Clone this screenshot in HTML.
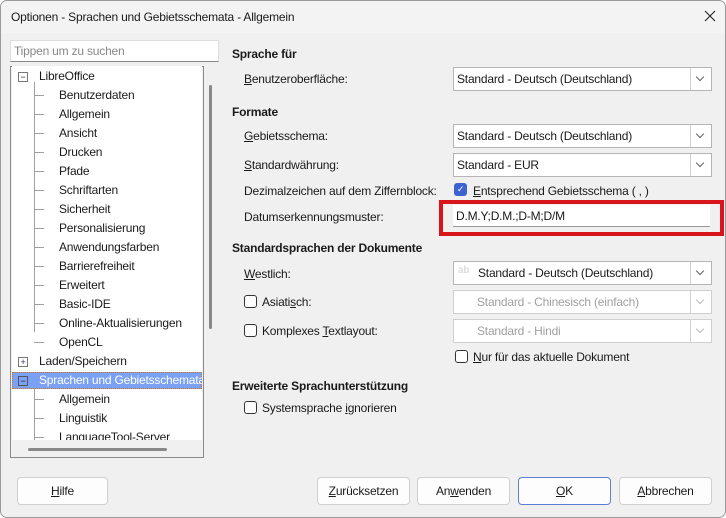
<!DOCTYPE html><html><head><style>
body{margin:0;width:726px;height:518px;background:#fff;font-family:"Liberation Sans",sans-serif;font-size:12px;letter-spacing:-0.2px;color:#1a1a1a;position:relative;overflow:hidden}
.win{position:absolute;left:0;top:0;width:724px;height:516px;border:1px solid #9a9a9a;border-radius:7px;background:#f0f0f0;overflow:hidden}
.a{position:absolute;white-space:nowrap}
.tb{position:absolute;left:0;top:0;width:724px;height:32px;background:#f3f3f3}
.tree{position:absolute;left:9px;top:65px;width:192px;height:390px;border:1px solid #8a8a8a;background:#f0f0f0}
.tin{position:absolute;left:1px;top:1px;width:190px;height:374px;background:#fff;overflow:hidden}
.it{position:absolute;left:47px}
.ln{position:absolute;left:16px;width:10px;border-top:1px solid #a0a0a0}
.cb{position:absolute;left:452px;width:257px;height:22px;border:1px solid #b5b5b5;background:#fff}
.cb span{position:absolute;left:3px;top:4px}
.cb i{position:absolute;right:0;top:0;width:20px;height:22px;border-left:1px solid #d0d0d0}
.cb i:after{content:"";position:absolute;left:6px;top:6px;width:5px;height:5px;border-right:1px solid #666;border-bottom:1px solid #666;transform:rotate(45deg)}
.dis{color:#a0a0a0;border-color:#cfcfcf}
.dis i:after{border-color:#bbb}
.h{font-weight:bold}
.chk{position:absolute;width:11px;height:11px;border:1px solid #333;border-radius:3px;background:#fff}
.btn{position:absolute;top:476px;height:26px;border:1px solid #d0d0d0;border-radius:4px;background:#fdfdfd;text-align:center;line-height:26px}
u{text-decoration:underline}
</style></head><body><div class="win">
<div class="tb"><div class="a" style="left:10px;top:9px">Optionen - Sprachen und Gebietsschemata - Allgemein</div>
<svg class="a" style="left:703px;top:9px" width="12" height="12"><path d="M1 1L11 11M11 1L1 11" stroke="#222" stroke-width="1.1"/></svg></div>
<div class="a" style="left:9px;top:39px;width:207px;height:20px;background:#fff;border:1px solid #ddd;border-bottom-color:#888"><span class="a" style="left:3px;top:3px;color:#888">Tippen um zu suchen</span></div>
<div class="tree"><div class="tin" style="top:-1px">
<div class="a" style="left:6px;top:6px;width:8px;height:8px;border:1px solid #777;font-size:9px;line-height:8px;text-align:center">−</div>
<div class="a" style="left:27px;top:3px">LibreOffice</div>
<div class="a" style="left:22px;top:16px;height:250px;border-left:1px solid #a0a0a0"></div>
<div class="it a" style="top:22px">Benutzerdaten</div>
<div class="it a" style="top:41px">Allgemein</div>
<div class="it a" style="top:60px">Ansicht</div>
<div class="it a" style="top:79px">Drucken</div>
<div class="it a" style="top:98px">Pfade</div>
<div class="it a" style="top:117px">Schriftarten</div>
<div class="it a" style="top:136px">Sicherheit</div>
<div class="it a" style="top:155px">Personalisierung</div>
<div class="it a" style="top:174px">Anwendungsfarben</div>
<div class="it a" style="top:193px">Barrierefreiheit</div>
<div class="it a" style="top:212px">Erweitert</div>
<div class="it a" style="top:231px">Basic-IDE</div>
<div class="it a" style="top:250px">Online-Aktualisierungen</div>
<div class="it a" style="top:269px">OpenCL</div>
<div class="ln" style="left:22px;top:29px"></div><div class="ln" style="left:22px;top:48px"></div><div class="ln" style="left:22px;top:67px"></div><div class="ln" style="left:22px;top:86px"></div><div class="ln" style="left:22px;top:105px"></div><div class="ln" style="left:22px;top:124px"></div><div class="ln" style="left:22px;top:143px"></div><div class="ln" style="left:22px;top:162px"></div><div class="ln" style="left:22px;top:181px"></div><div class="ln" style="left:22px;top:200px"></div><div class="ln" style="left:22px;top:219px"></div><div class="ln" style="left:22px;top:238px"></div><div class="ln" style="left:22px;top:257px"></div><div class="ln" style="left:22px;top:276px"></div>
<div class="a" style="left:6px;top:291px;width:8px;height:8px;border:1px solid #777;font-size:9px;line-height:8px;text-align:center;color:#336">+</div>
<div class="a" style="left:27px;top:288px">Laden/Speichern</div>
<div class="a" style="left:0;top:306px;width:190px;height:17px;background:#7ba1f5;border:1px dotted #d07020;box-sizing:border-box"></div>
<div class="a" style="left:6px;top:310px;width:8px;height:8px;border:1px solid #555;font-size:9px;line-height:8px;text-align:center">−</div>
<div class="a" style="left:27px;top:307px;color:#fff">Sprachen und Gebietsschemata</div>
<div class="a" style="left:22px;top:322px;height:60px;border-left:1px solid #a0a0a0"></div>
<div class="it a" style="top:326px">Allgemein</div>
<div class="it a" style="top:345px">Linguistik</div>
<div class="it a" style="top:364px">LanguageTool-Server</div>
<div class="ln" style="left:22px;top:333px"></div><div class="ln" style="left:22px;top:352px"></div><div class="ln" style="left:22px;top:371px"></div>
</div>
<div class="a" style="left:198px;top:18px;width:3px;height:244px;background:#888;border-radius:2px"></div>
<div class="a" style="left:17px;top:381px;width:139px;height:3px;background:#888;border-radius:2px"></div>
</div>
<div class="a h" style="left:231px;top:46px">Sprache für</div>
<div class="a" style="left:243px;top:71px"><u>B</u>enutzeroberfläche:</div>
<div class="cb" style="top:66px"><span>Standard - Deutsch (Deutschland)</span><i></i></div>
<div class="a h" style="left:231px;top:104px">Formate</div>
<div class="a" style="left:243px;top:128px"><u>G</u>ebietsschema:</div>
<div class="cb" style="top:123px"><span>Standard - Deutsch (Deutschland)</span><i></i></div>
<div class="a" style="left:243px;top:157px"><u>S</u>tandardwährung:</div>
<div class="cb" style="top:152px"><span>Standard - EUR</span><i></i></div>
<div class="a" style="left:243px;top:183px">Dezimalzeichen auf dem Ziffernblock:</div>
<div class="a" style="left:453px;top:182px;width:13px;height:13px;background:#3c63d0;border-radius:3px;color:#fff;font-size:9px;line-height:13px;text-align:center">✓</div>
<div class="a" style="left:472px;top:183px"><u>E</u>ntsprechend Gebietsschema ( , )</div>
<div class="a" style="left:243px;top:209px">Datumserkennungsmuster:</div>
<div class="a" style="left:438px;top:199px;width:277px;height:28px;border:4px solid #d9141c"></div>
<div class="a" style="left:452px;top:204px;width:257px;height:21px;background:#fff;border-bottom:1px solid #999"><span class="a" style="left:3px;top:4px">D.M.Y;D.M.;D-M;D/M</span></div>
<div class="a h" style="left:231px;top:240px">Standardsprachen der Dokumente</div>
<div class="a" style="left:243px;top:266px"><u>W</u>estlich:</div>
<div class="cb" style="top:260px"><span style="left:24px">Standard - Deutsch (Deutschland)</span><b class="a" style="left:4px;top:3px;color:#ddd;font-size:10px">ab</b><i></i></div>
<div class="chk" style="left:243px;top:294px"></div><div class="a" style="left:261px;top:294px">Asiati<u>s</u>ch:</div>
<div class="cb dis" style="top:289px"><span style="left:23px">Standard - Chinesisch (einfach)</span><i></i></div>
<div class="chk" style="left:243px;top:323px"></div><div class="a" style="left:261px;top:323px">Komplexes <u>T</u>extlayout:</div>
<div class="cb dis" style="top:318px"><span style="left:23px">Standard - Hindi</span><i></i></div>
<div class="chk" style="left:454px;top:349px"></div><div class="a" style="left:472px;top:349px"><u>N</u>ur für das aktuelle Dokument</div>
<div class="a h" style="left:231px;top:378px">Erweiterte Sprachunterstützung</div>
<div class="chk" style="left:243px;top:400px"></div><div class="a" style="left:261px;top:400px">Systemsprache <u>i</u>gnorieren</div>
<div class="btn" style="left:16px;width:89px"><u>H</u>ilfe</div>
<div class="btn" style="left:316px;width:91px"><u>Z</u>urücksetzen</div>
<div class="btn" style="left:416px;width:91px">An<u>w</u>enden</div>
<div class="btn" style="left:517px;width:91px;border-color:#5b7fd6"><u>O</u>K</div>
<div class="btn" style="left:618px;width:91px"><u>A</u>bbrechen</div>
</div></body></html>
